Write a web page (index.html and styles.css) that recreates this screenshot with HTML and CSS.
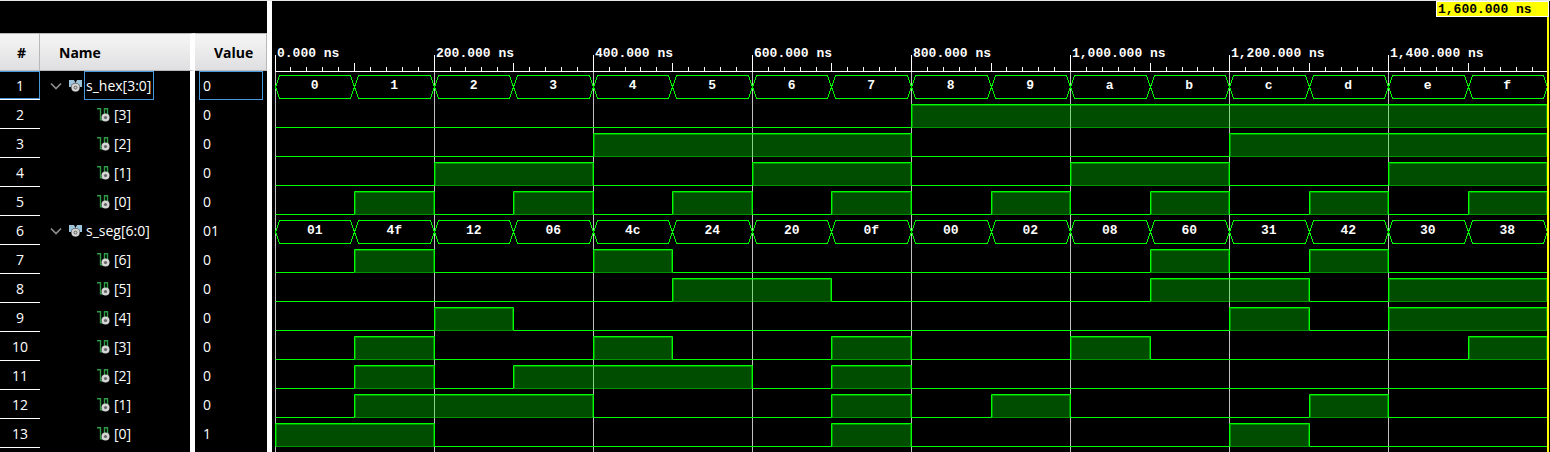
FILE: index.html
```html
<!DOCTYPE html>
<html lang="en">
<head>
<meta charset="utf-8">
<title>Waveform</title>
<link rel="stylesheet" href="styles.css">
</head>
<body>
<svg class="defs" aria-hidden="true">
  <symbol id="bus" viewBox="0 0 13 12">
    <path d="M0 0h5l1.500 3L8 0h5v7H0z" fill="#9cc5dc"/>
    <circle cx="6.500" cy="7.500" r="4.500" fill="#333"/>
    <circle cx="6.500" cy="7.500" r="4" fill="#d4d4d4"/>
    <circle cx="6.500" cy="7.500" r="2" fill="#777"/>
    <circle cx="6.500" cy="7.500" r="1" fill="#ccc"/>
  </symbol>
  <symbol id="bit" viewBox="0 0 13 14">
    <path d="M0 .7h3.500v11H7.500V.7h3v6" fill="none" stroke="#2f9a45" stroke-width="1.400"/>
    <circle cx="8.500" cy="9.500" r="4" fill="#d4d4d4"/>
    <circle cx="8.500" cy="9.500" r="1.600" fill="#666"/>
  </symbol>
  <symbol id="chevron" viewBox="0 0 12 8">
    <path d="M1 1.500l5 5 5-5" fill="none" stroke="#8c8c8c" stroke-width="1.700"/>
  </symbol>
</svg>
<main class="viewer">
  <section class="signals">
    <table class="table">
      <thead><tr><th class="num">#</th><th class="name">Name</th><th class="value">Value</th></tr></thead>
      <tbody id="signals"></tbody>
    </table>
    <div class="rest"></div>
  </section>
  <section class="waves" id="waves">
    <svg class="plot" id="plot" aria-hidden="true"></svg>
    <div class="ruler" id="ruler"></div>
    <div id="lanes"></div>
    <div class="marker">1,600.000 ns</div>
  </section>
</main>
<script src="wave.js"></script>
</body>
</html>
```
FILE: styles.css
```css
* { box-sizing: border-box; }
body { margin: 0; background: #000; color: #fff; font: 14px/29px "Open Sans", "Noto Sans", sans-serif; }
.defs { position: absolute; width: 0; height: 0; }
.viewer { display: flex; min-height: 100vh; overflow: hidden; border-top: 1px solid #e6e6e6; }
.signals { display: flex; flex-direction: column; flex: none; width: 272px; padding-top: 32px; border-right: 5px solid #fff; }
.table { width: 100%; table-layout: fixed; border-collapse: separate; border-spacing: 0; }
.table th, .table td { padding: 0; height: 29px; text-align: left; white-space: nowrap; }
.table th { height: 38px; color: #000; background: linear-gradient(#f6f6f6, #dfdfe1); border: 1px solid #b8b8b8; border-left: 0; font-size: 14px; }
.table .num { width: 40px; text-align: center; }
.table th.num { padding-left: 4px; }
.table th.name { width: 155px; padding-left: 19px; border-right: 5px solid #fff; }
.table th.value { padding-left: 19px; }
.table td.num { box-shadow: inset 0 -1px #fff; }
.table td.name { border-right: 5px solid #fff; }
.table td.value { padding-left: 8px; }
.rest { flex: 1; width: 195px; border-right: 5px solid #fff; }
.entry { display: flex; align-items: center; height: 29px; padding-left: 10px; }
.entry.bit { padding-left: 57px; }
.toggle { display: flex; width: 19px; height: 20px; padding: 0; border: 0; background: none; align-items: center; }
.chevron { width: 12px; height: 8px; }
.bus-icon { width: 13px; height: 12px; margin-right: 2px; }
.bit-icon { width: 13px; height: 14px; margin-right: 4px; }
.label { height: 29px; padding: 0 2px 0 1px; border: 1px solid transparent; line-height: 27px; }
.bit .label { padding-left: 0; border-left: 0; }
.selected .label { border-color: #4a98dc; }
.table .selected td.num { box-shadow: inset 0 -1px #fff, inset 0 1px #4a98dc, inset -1px -2px #4a98dc; }
.table .selected td.value { padding: 0 4px; }
.box { display: block; height: 29px; }
.selected .box { padding-left: 3px; border: 1px solid #4a98dc; line-height: 27px; }
.waves { position: relative; flex: 1; min-width: 0; padding: 0 3px; font: bold 13px/20px "Liberation Mono", monospace; }
.plot { position: absolute; inset: 0; width: 100%; height: 100%; }
.ruler { position: relative; display: grid; grid-template-columns: repeat(8, 1fr); height: 70px; padding-top: 43px; }
.ruler span { padding-left: 2px; white-space: nowrap; }
.lane { position: relative; display: grid; grid-template-columns: repeat(16, 1fr); height: 29px; padding-top: 5px; text-align: center; }
.marker { position: absolute; top: 0; right: 1px; width: 113px; height: 16px; padding-left: 1px; border: 1px solid #fff; background: #ff0; color: #000; line-height: 16px; white-space: nowrap; }
.axis { fill: #fff; }
.grid { fill: #c0c0c0; }
.line { fill: none; stroke: #0f0; }
.fill { fill: #0f0; fill-opacity: .3; }
.edge { fill: none; stroke: #0f0; stroke-opacity: .4; }
.cursor { fill: #ff0; }
```
FILE: wave.js
```js
const hex = "0 1 2 3 4 5 6 7 8 9 a b c d e f".split(" ");
const seg = "01 4f 12 06 4c 24 20 0f 00 02 08 60 31 42 30 38".split(" ");
const signals = [];
for (const [name, values, width] of [["s_hex[3:0]", hex, 4], ["s_seg[6:0]", seg, 7]]) {
  signals.push({ name, values, bus: true });
  for (let b = width - 1; b >= 0; b--) {
    signals.push({ name: `[${b}]`, values: values.map(v => parseInt(v, 16) >> b & 1) });
  }
}

document.getElementById("signals").innerHTML = signals.map((s, i) => `
  <tr class="${i ? "" : "selected"}">
    <td class="num">${i + 1}</td>
    <td class="name"><div class="entry ${s.bus ? "" : "bit"}">${s.bus
      ? '<button class="toggle" aria-label="Collapse"><svg class="chevron"><use href="#chevron"/></svg></button><svg class="bus-icon"><use href="#bus"/></svg>'
      : '<svg class="bit-icon"><use href="#bit"/></svg>'}<span class="label">${s.name}</span></div></td>
    <td class="value"><span class="box">${s.values[0]}</span></td>
  </tr>`).join("");

document.getElementById("ruler").innerHTML = Array.from({ length: 8 }, (_, i) =>
  `<span>${(i * 200).toLocaleString("en-US")}.000 ns</span>`).join("");

document.getElementById("lanes").innerHTML = signals.map(s =>
  `<div class="lane">${s.bus ? s.values.map(v => `<span>${v}</span>`).join("") : ""}</div>`).join("");

function draw() {
  const plot = document.getElementById("plot");
  const { width, height } = plot.getBoundingClientRect();
  const at = n => Math.min(width - 3, Math.floor(3 + (width - 5) * n / 16));
  const rect = (cls, x, y, w, h) => `<rect class="${cls}" x="${x}" y="${y}" width="${w}" height="${h}"/>`;
  let out = rect("axis", 3, 70, at(16) - 3, 1);
  for (let t = 0; t < 80; t++) {
    const top = t % 10 === 0 ? 54 : t % 5 === 0 ? 62 : 66;
    out += rect("axis", at(t / 5), top, 1, 70 - top);
    if (t % 10 === 0) out += rect("grid", at(t / 5), 71, 1, height - 71);
  }
  signals.forEach((s, i) => {
    const top = 74.5 + 29 * i;
    const bottom = top + 23;
    if (s.bus) {
      s.values.forEach((v, n) => {
        const a = at(n) + .5, b = at(n + 1) + .5, mid = top + 11.5;
        out += `<path class="line" shape-rendering="crispEdges" d="M${a} ${mid}L${a + 4} ${top}H${b - 4}L${b} ${mid}L${b - 4} ${bottom}H${a + 4}Z"/>`;
      });
      return;
    }
    let d = `M3.5 ${bottom}`;
    for (let n = 0; n < 16;) {
      let e = n;
      while (e < 16 && s.values[e] === s.values[n]) e++;
      const a = at(n) + .5, b = at(e) + .5;
      if (s.values[n]) {
        out += rect("fill", a + .5, top + .5, b - a - 1, 23);
        out += `<path class="edge" d="M${a + 1} ${bottom}V${top + 1}H${b - 1}V${bottom}Z"/>`;
      }
      d += `V${s.values[n] ? top : bottom}H${b}`;
      n = e;
    }
    out += `<path class="line" d="${d}"/>`;
  });
  out += rect("cursor", at(16), 16, 2, height - 16);
  plot.innerHTML = out;
}
draw();
addEventListener("resize", draw);
```
